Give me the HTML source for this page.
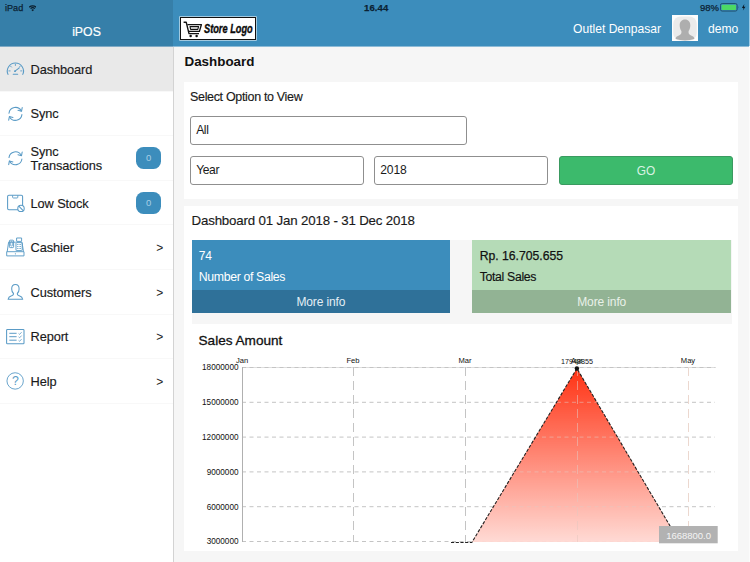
<!DOCTYPE html>
<html><head><meta charset="utf-8">
<style>
*{box-sizing:border-box;margin:0;padding:0}
html,body{width:750px;height:562px;overflow:hidden;background:#f6f6f6;font-family:"Liberation Sans",sans-serif;color:#222}
.abs{position:absolute}
#hdrL{left:0;top:0;width:173px;height:47px;background:#367fa9}
#hdrR{left:173px;top:0;width:577px;height:47px;background:#3c8dbc}
#side{left:0;top:47px;width:172.5px;height:515px;background:#fff}
#sideb{left:172.5px;top:47px;width:1.5px;height:515px;background:#d3d3d3}
.st{-webkit-text-stroke:0.25px #0b2233;color:#0b2233;font-size:9.5px;line-height:12px;top:2px;white-space:nowrap}
.item{left:0;width:172.5px;height:44.6px;border-bottom:1px solid #f8f8f8}
.item .t{position:absolute;left:30.5px;top:0.7px;height:44.6px;display:flex;align-items:center;font-size:12.8px;line-height:14.2px;color:#1a1a1a;letter-spacing:-0.1px;-webkit-text-stroke:0.15px #1a1a1a}
.item .a{position:absolute;left:156.3px;top:0.6px;height:44.6px;display:flex;align-items:center;font-size:12px;color:#222}
.item svg{position:absolute;left:0;top:0;width:30px;height:44.6px;overflow:visible}
.badge{position:absolute;left:136px;top:11.2px;width:25.3px;height:21.6px;border-radius:7.5px;background:#3c8dbc;color:#a9cfe6;font-size:9.5px;text-align:center;line-height:21.6px}
.panel{background:#fff}
.inp{border:1px solid #8f8f8f;border-radius:3px;background:#fff;font-size:12.1px;letter-spacing:-0.38px;line-height:27.3px;padding-left:5.2px;color:#1a1a1a;height:29px}
</style></head><body>
<div class="abs" id="hdrL"></div>
<div class="abs" id="hdrR"></div>
<div class="abs st" style="left:5px;font-size:9.1px">iPad</div>
<svg class="abs" style="left:28.7px;top:5px" width="7.4" height="6.6" viewBox="-0.1 0.2 7.4 6.6"><g fill="none" stroke="#0b1d2b" stroke-linecap="butt"><path d="M0.07 2.46 A5 5 0 0 1 7.13 2.46" stroke-width="1.35"/><path d="M1.48 3.88 A3 3 0 0 1 5.72 3.88" stroke-width="1.25"/></g><path d="M3.6 6.5 L2.3 5.1 A1.9 1.9 0 0 1 4.9 5.1Z" fill="#0b1d2b"/></svg>
<div class="abs st" style="left:364px;font-weight:bold;letter-spacing:.1px">16.44</div>
<div class="abs st" style="left:700px">98%</div>
<svg class="abs" style="left:720px;top:3.4px" width="30" height="9" viewBox="0 0 30 9"><rect x="0.45" y="0.55" width="16.7" height="7.5" rx="1.7" fill="none" stroke="#1d4a66" stroke-width="0.9"/><rect x="1.6" y="1.7" width="14.4" height="5.2" rx="0.7" fill="#4cd964"/><path d="M18 3.1 Q19.2 4.3 18 5.5Z" fill="#2a6588"/><path d="M24.3 1.0 L21.9 5 L23.5 5 L22.9 7.6 L25.5 3.7 L23.9 3.7Z" fill="#0b1a26"/></svg>
<div class="abs" style="left:0;top:23.6px;width:173px;text-align:center;color:#fff;font-size:12.3px;line-height:16px;-webkit-text-stroke:0.2px #fff">iPOS</div>

<div class="abs" style="left:0;top:46px;width:173px;height:1px;background:#7fa9c4"></div>
<div class="abs" style="left:173px;top:46px;width:577px;height:1px;background:#8dbbd7"></div>
<div class="abs" style="left:749px;top:0;width:1px;height:46px;background:#9ccbe6"></div>
<div class="abs" style="left:749px;top:46px;width:1px;height:516px;background:#fbfbfb"></div>
<!-- store logo -->
<div class="abs" style="left:180px;top:16.7px;width:75.6px;height:23.5px;background:#fff;border:1.3px solid #111;box-shadow:0 0 0 0.7px rgba(255,255,255,.75)"></div>
<svg class="abs" style="left:183.2px;top:21.2px" width="20" height="18" viewBox="0 0 20 18"><g fill="none" stroke="#111" stroke-linejoin="round"><path d="M0.6 1.2 L3.2 1.2 L6 12.6 L16 12.6" stroke-width="1.4"/><path d="M4.4 3.6 L18.4 3.6 L16.4 10.4 L6 10.4" stroke-width="1.4"/><path d="M7 5.6 L15.6 5.6 L14.8 8.4 L7.6 8.4Z" stroke-width="1.1"/><circle cx="7.6" cy="15" r="1.25" fill="#111" stroke="none"/><circle cx="13.6" cy="15" r="1.25" fill="#111" stroke="none"/></g></svg>
<div class="abs" style="left:203.6px;top:19.6px;font-style:italic;font-weight:bold;font-size:12.4px;line-height:18px;color:#0a0a0a;white-space:nowrap;transform:scaleX(0.745);transform-origin:0 0;-webkit-text-stroke:0.35px #0a0a0a">Store Logo</div>

<div class="abs" style="left:573px;top:20.8px;color:#fff;font-size:12.1px;line-height:16px;white-space:nowrap">Outlet Denpasar</div>
<div class="abs" style="left:672px;top:15px;width:26px;height:26px;background:#fdfdfd;overflow:hidden"><svg width="26" height="26" viewBox="0 0 26 26"><rect x="1.2" y="1.4" width="23.6" height="24" rx="7.5" fill="#ebebeb"/><path d="M13 4.6 C16.4 4.6 18.3 7 18.3 10.4 C18.3 12.6 17.6 14.6 16.6 15.9 C16.3 18.2 17 19.4 18.6 20.2 C20.6 21.1 22.2 21.6 22.4 24 Q18 25.4 13 25.4 Q8 25.4 3.6 24 C3.8 21.6 5.4 21.1 7.4 20.2 C9 19.4 9.7 18.2 9.4 15.9 C8.4 14.6 7.7 12.6 7.7 10.4 C7.7 7 9.6 4.6 13 4.6Z" fill="#aeaeae"/></svg></div>
<div class="abs" style="left:708px;top:20.8px;color:#fff;font-size:12.1px;line-height:16px">demo</div>

<!-- sidebar -->
<div class="abs" id="side"></div>
<div class="abs" id="sideb"></div>
<div class="abs item" style="top:47.0px;background:#e9e9e9"><svg viewBox="0 0 30 44.6"><g fill="none" stroke="#5a9bc6" stroke-width="1.05" stroke-linecap="round"><path d="M8.0 27.4 A8.1 8.1 0 1 1 22.8 27.4"/><path d="M15 24.2 L19.3 20.9"/><path d="M13.2 27.3 L17.7 27.3"/><path d="M8.9 23.9 L10.1 23.9 M10.6 19.2 L11.5 20.1 M15.4 17.2 L15.4 18.5 M20.2 19.2 L19.4 20 M21.9 23.9 L20.7 23.9" stroke-width="0.9"/></g><circle cx="15" cy="24.2" r="0.9" fill="#5a9bc6"/></svg><div class="t">Dashboard</div></div>
<div class="abs item" style="top:91.6px"><svg viewBox="0 0 30 44.6"><g fill="none" stroke="#5a9bc6" stroke-width="1.05" stroke-linecap="round" stroke-linejoin="round"><path d="M9.0 21.2 A6.5 6.5 0 0 1 21.2 18.9"/><path d="M21.9 22.6 A6.5 6.5 0 0 1 9.7 24.9"/><path d="M22.2 15.6 L21.5 19.3 L18 18.3"/><path d="M8.7 28.2 L9.4 24.5 L12.9 25.5"/></g></svg><div class="t">Sync</div></div>
<div class="abs item" style="top:136.2px"><svg viewBox="0 0 30 44.6"><g transform="translate(0,0.4)"><g fill="none" stroke="#5a9bc6" stroke-width="1.05" stroke-linecap="round" stroke-linejoin="round"><path d="M9.0 21.2 A6.5 6.5 0 0 1 21.2 18.9"/><path d="M21.9 22.6 A6.5 6.5 0 0 1 9.7 24.9"/><path d="M22.2 15.6 L21.5 19.3 L18 18.3"/><path d="M8.7 28.2 L9.4 24.5 L12.9 25.5"/></g></g></svg><div class="t">Sync<br>Transactions</div><div class="badge">0</div></div>
<div class="abs item" style="top:180.8px"><svg viewBox="0 0 30 44.6"><g fill="none" stroke="#5a9bc6" stroke-width="1.05"><rect x="7.6" y="14.2" width="15" height="14.6" rx="1.3"/><path d="M12.6 14.4 V16.2 Q12.6 17 13.4 17 H17 Q17.8 17 17.8 16.2 V14.4" stroke-width="0.9"/><circle cx="21" cy="27.4" r="3.2" fill="#fff"/><path d="M18.8 25.2 L23.2 29.6"/></g></svg><div class="t">Low Stock</div><div class="badge">0</div></div>
<div class="abs item" style="top:225.4px"><svg viewBox="0 0 30 44.6"><g fill="none" stroke="#5a9bc6" stroke-width="0.95" stroke-linejoin="round"><path d="M6.7 26.7 H24 V30.9 H6.7Z"/><path d="M7.2 26.7 L8.6 17.2 H15.8 M22 17.2 L23.5 26.7"/><rect x="9.4" y="15.2" width="4.2" height="7.4" rx="0.8"/><rect x="10.6" y="16.6" width="1.8" height="4.4" rx="0.4" stroke-width="0.7"/><rect x="16.6" y="13" width="5" height="3.4"/><rect x="16" y="17.6" width="6.2" height="8" rx="0.5"/><path d="M17.2 19.5 H21 M17.2 21.5 H21 M17.2 23.5 H21" stroke-dasharray="0.9 0.55" stroke-width="0.9"/></g><circle cx="15.4" cy="28.8" r="0.6" fill="#5a9bc6"/></svg><div class="t">Cashier</div><div class="a">&gt;</div></div>
<div class="abs item" style="top:270.0px"><svg viewBox="0 0 30 44.6"><path d="M15.4 14.6 C17.9 14.6 19.1 16.6 19.1 18.9 C19.1 20.9 18.3 22.6 17.3 23.5 C17.1 24.6 17.5 25.1 18.6 25.6 C20.6 26.4 22.4 26.8 22.7 29.2 L8.1 29.2 C8.4 26.8 10.2 26.4 12.2 25.6 C13.3 25.1 13.7 24.6 13.5 23.5 C12.5 22.6 11.7 20.9 11.7 18.9 C11.7 16.6 12.9 14.6 15.4 14.6Z" fill="none" stroke="#5a9bc6" stroke-width="1.05" stroke-linejoin="round"/></svg><div class="t">Customers</div><div class="a">&gt;</div></div>
<div class="abs item" style="top:314.6px"><svg viewBox="0 0 30 44.6"><g fill="none" stroke="#5a9bc6"><rect x="6.6" y="14.5" width="17.4" height="14.2" rx="0.8" stroke-width="1.05"/><path d="M9.3 18.3 H16.6 M9.3 21.7 H16.6 M9.3 25.2 H16.6" stroke-width="1"/><path d="M18.6 18.5 L19.6 19.4 L21.6 17.2 M18.6 21.9 L19.6 22.8 L21.6 20.6 M18.6 25.4 L19.6 26.3 L21.6 24.1" stroke-width="0.8"/></g></svg><div class="t">Report</div><div class="a">&gt;</div></div>
<div class="abs item" style="top:359.2px"><svg viewBox="0 0 30 44.6"><circle cx="15.15" cy="21.95" r="8.2" fill="none" stroke="#5a9bc6" stroke-width="0.9"/><text x="15.4" y="26.3" text-anchor="middle" font-size="12.3" fill="#5a9bc6" font-family="Liberation Sans, sans-serif">?</text></svg><div class="t">Help</div><div class="a">&gt;</div></div>


<!-- content -->
<div class="abs" style="left:184.5px;top:53.2px;font-weight:bold;font-size:13.4px;line-height:17px;color:#111">Dashboard</div>
<div class="abs panel" style="left:184px;top:82px;width:554px;height:117px"></div>
<div class="abs" style="left:190px;top:88.8px;font-size:12.5px;letter-spacing:-0.33px;line-height:16px;color:#1a1a1a;-webkit-text-stroke:0.15px #1a1a1a">Select Option to View</div>
<div class="abs inp" style="left:190px;top:115.5px;width:277px">All</div>
<div class="abs inp" style="left:190px;top:156px;width:174px">Year</div>
<div class="abs inp" style="left:374px;top:156px;width:174px;letter-spacing:-0.1px">2018</div>
<div class="abs" style="left:559px;top:156px;width:174px;height:29px;background:#3cba6c;border:1px solid #3a9a60;border-radius:3px;color:#d9f3e3;font-size:11.9px;text-align:center;line-height:28px">GO</div>

<div class="abs panel" style="left:184px;top:205.5px;width:554px;height:345px"></div>
<div class="abs" style="left:191.5px;top:212.4px;font-size:13.3px;letter-spacing:-0.17px;line-height:18px;color:#1a1a1a;white-space:nowrap;-webkit-text-stroke:0.15px #1a1a1a">Dashboard 01 Jan 2018 - 31 Dec 2018</div>
<div class="abs" style="left:191.5px;top:240.4px;width:540px;height:83.6px;background:#f6f6f6"></div>
<div class="abs" style="left:191.5px;top:240.4px;width:258.8px;height:72.8px;background:#3c8dbc"></div>
<div class="abs" style="left:191.5px;top:289.5px;width:258.8px;height:23.7px;background:#2f7199;color:#e3eef5;font-size:12px;letter-spacing:-0.12px;line-height:24.4px;text-align:center">More info</div>
<div class="abs" style="left:198.7px;top:247.8px;color:#fff;font-size:12px;line-height:16px">74</div>
<div class="abs" style="left:198.7px;top:269.2px;color:#fff;font-size:12.3px;letter-spacing:-0.34px;line-height:16px">Number of Sales</div>
<div class="abs" style="left:472.2px;top:240.4px;width:259px;height:72.8px;background:#b5dbb7"></div>
<div class="abs" style="left:472.2px;top:289.5px;width:259px;height:23.7px;background:#92b394;color:#e9f1e9;font-size:12px;letter-spacing:-0.12px;line-height:24.4px;text-align:center">More info</div>
<div class="abs" style="left:479.7px;top:247.8px;color:#111;font-size:12.2px;line-height:16px;-webkit-text-stroke:0.25px #111">Rp. 16.705.655</div>
<div class="abs" style="left:479.7px;top:269.2px;color:#111;font-size:12.3px;letter-spacing:-0.34px;line-height:16px;-webkit-text-stroke:0.15px #111">Total Sales</div>

<div class="abs" style="left:198.5px;top:331.8px;font-size:13.6px;line-height:18px;color:#111;-webkit-text-stroke:0.3px #111">Sales Amount</div>

<svg class="abs" style="left:184px;top:350px" width="554" height="200" viewBox="184 350 554 200" font-family="Liberation Sans, sans-serif">
<defs><linearGradient id="g" x1="0" y1="0" x2="0" y2="1"><stop offset="0" stop-color="#ff2a0a"/><stop offset="1" stop-color="#ffd9d3"/></linearGradient></defs>
<path d="M242 367.5 H716" stroke="#dedede" stroke-width="1"/>
<g stroke="#c4c4c4" stroke-width="1" stroke-dasharray="4 3.5" fill="none">
<path d="M242 367.5 H715 M242 402.3 H715 M242 437.1 H715 M242 471.9 H715 M242 506.7 H715 M242 541.5 H715"/>
</g>
<g stroke="#c4c4c4" stroke-width="1" stroke-dasharray="9 5" fill="none">
<path d="M353.5 367 V542 M465.5 367 V542 M577.5 367 V542"/>
</g>
<path d="M688.5 367 V542" stroke="#ecd8cf" stroke-width="1" stroke-dasharray="9 5"/>
<polygon points="576.9,368.5 679.8,542 471.8,542" fill="url(#g)" opacity="0.96"/>
<clipPath id="tc"><polygon points="576.9,368.5 679.8,542 471.8,542"/></clipPath>
<g clip-path="url(#tc)" stroke="#e8c9c2" stroke-width="1" fill="none" opacity="0.55"><path d="M242 402.3 H715 M242 437.1 H715 M242 471.9 H715 M242 506.7 H715" stroke-dasharray="4 3.5"/><path d="M577.5 367 V542" stroke-dasharray="9 5"/></g>
<path d="M242.5 367 V542" stroke="#b0b0b0" stroke-width="1"/>
<path d="M451 542.5 L471.8 542.5 L576.9 368.5 L679.8 542.5" fill="none" stroke="#222" stroke-width="1.1" stroke-dasharray="3.2 1.5"/>
<circle cx="576.9" cy="368.5" r="2.2" fill="#111"/>
<g font-size="7.6" fill="#111" text-anchor="middle">
<text x="242" y="363">Jan</text><text x="353" y="363">Feb</text><text x="465" y="363">Mar</text><text x="577" y="363">Apr</text><text x="688" y="363">May</text>
<text x="577" y="363.5" font-size="7.2">17948855</text>
</g>
<g font-size="8.2" fill="#111" text-anchor="end">
<text x="238.5" y="370.4">18000000</text><text x="238.5" y="405.2">15000000</text><text x="238.5" y="440">12000000</text><text x="238.5" y="474.8">9000000</text><text x="238.5" y="509.6">6000000</text><text x="238.5" y="544.4">3000000</text>
</g>
<rect x="659" y="526" width="58.7" height="17.3" fill="#b2b2b2"/>
<text x="688.6" y="538.6" font-size="9.5" fill="#f4f4f4" text-anchor="middle">1668800.0</text>
</svg>
</body></html>
